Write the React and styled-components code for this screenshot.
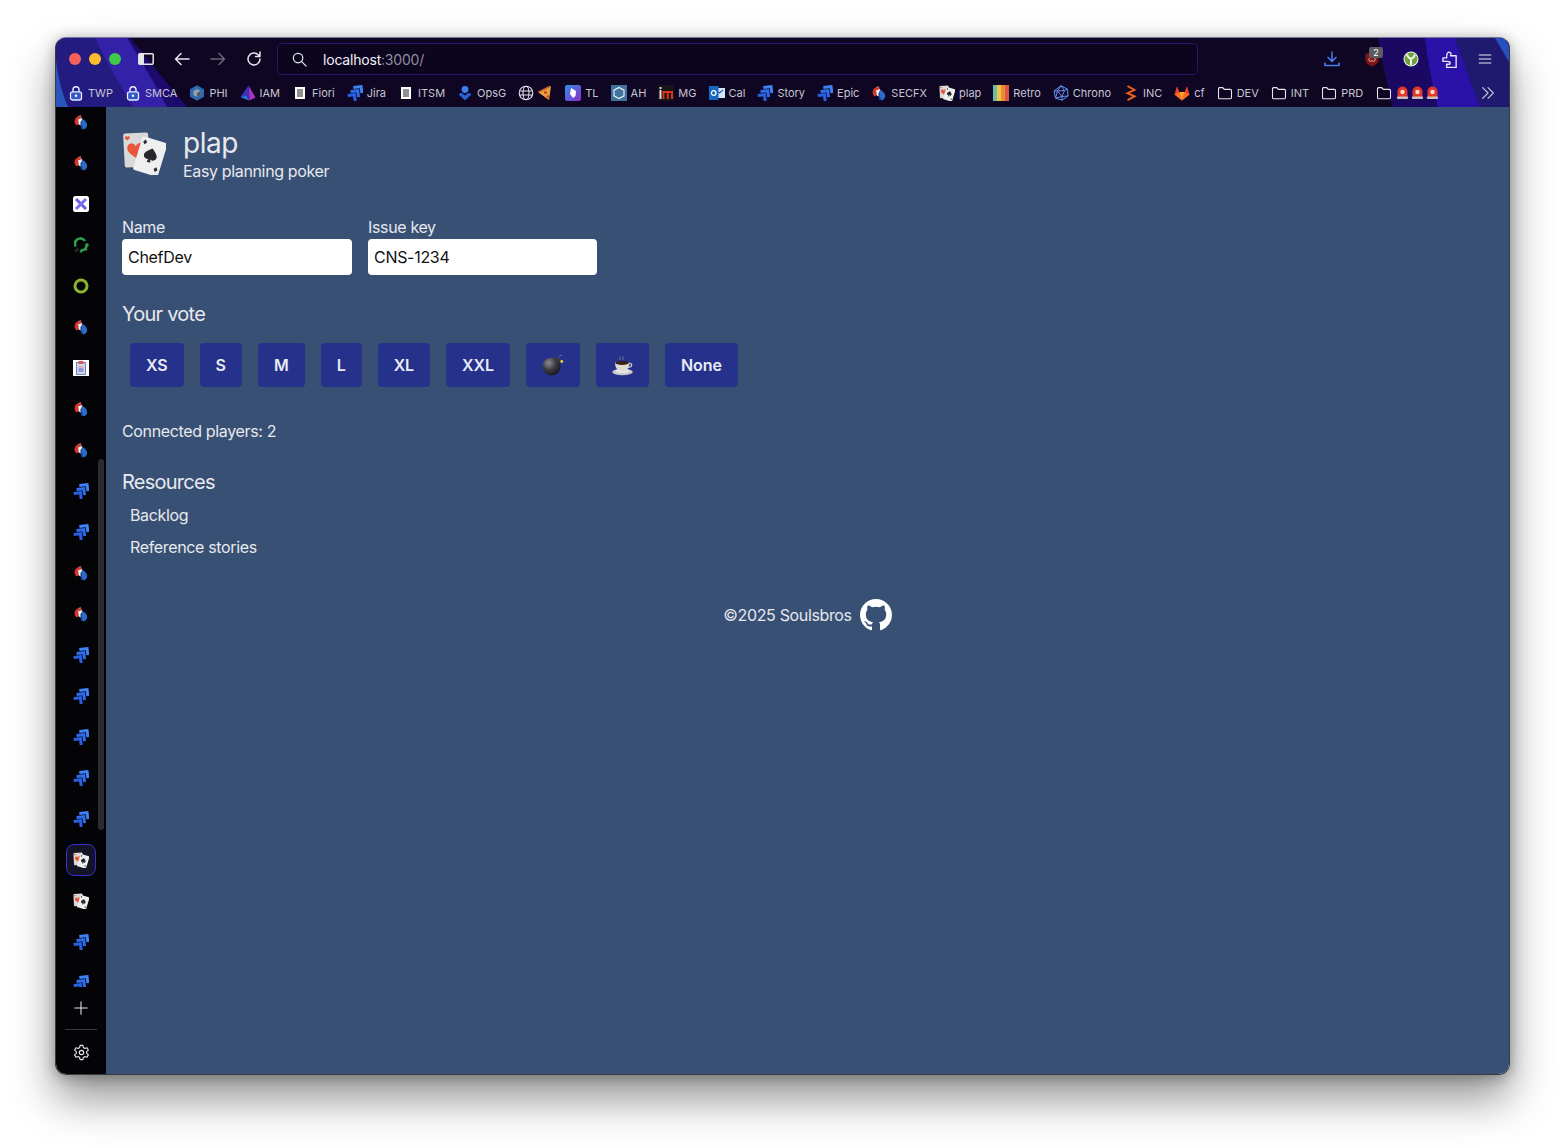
import React from "react";
import styled, { createGlobalStyle } from "styled-components";

const Global = createGlobalStyle`
  html, body { margin: 0; padding: 0; background: #fff; }
  * { box-sizing: border-box; }
  #root { font-family: Inter, "Noto Sans", "Liberation Sans", sans-serif; }
`;

const Page = styled.div`
  width: 1565px;
  height: 1148px;
  padding: 37px 55px 73px;
  overflow: hidden;
  background: #fff;
`;
const Win = styled.div`
  width: 1455px;
  height: 1038px;
  display: flex;
  flex-direction: column;
  border: 1px solid #3a3a42;
  border-top-color: #77749c;
  border-radius: 11px;
  overflow: hidden;
  box-shadow: 0 24px 44px rgba(0,0,0,.42), 0 2px 14px rgba(0,0,0,.3);
`;
const Chrome = styled.header`
  position: relative;
  height: 69px;
  flex: none;
  background: #0e0622;
`;
const ThemeArt = styled.svg`
  position: absolute;
  inset: 0;
  width: 100%;
  height: 100%;
`;
const Toolbar = styled.div`
  position: relative;
  height: 39px;
  padding: 3px 0 0 13px;
  display: flex;
  align-items: center;
`;
const Lights = styled.div`
  display: flex;
  gap: 8px;
  width: 59px;
`;
const Light = styled.span`
  width: 12px;
  height: 12px;
  border-radius: 50%;
  background: ${p => p.$c};
`;
const ToolBtn = styled.span`
  position: relative;
  width: ${p => p.$w || 36}px;
  height: 32px;
  flex: none;
  display: flex;
  align-items: center;
  justify-content: center;
  color: ${p => p.$c || "#e8e8ee"};
`;
const UrlBar = styled.div`
  width: 921px;
  height: 32px;
  margin-left: 5px;
  padding-left: 13px;
  display: flex;
  align-items: center;
  gap: 15px;
  border: 1px solid #25176a;
  border-radius: 5px;
  background: #0c0520;
  color: #e8e8ee;
  font-size: 14px;
  letter-spacing: -.2px;
`;
const Host = styled.span`
  color: #f2f2f5;
`;
const Port = styled.span`
  color: #8f8d9c;
`;
const RightTools = styled.div`
  display: flex;
  margin-left: 115px;
`;
const Badge = styled.span`
  position: absolute;
  left: 18px;
  top: 4px;
  width: 14px;
  height: 11px;
  border-radius: 2px;
  background: #5b5b60;
  color: #fff;
  font-size: 9px;
  line-height: 11px;
  text-align: center;
`;
const Bookmarks = styled.nav`
  position: relative;
  height: 30px;
  padding: 1px 0 0 12px;
  display: flex;
  align-items: center;
  gap: 12px;
`;
const Mark = styled.span`
  display: flex;
  align-items: center;
  gap: ${p => p.$gap ?? 4}px;
  color: #c6c5d0;
  font-size: 11px;
  white-space: nowrap;
  svg { flex: none; display: block; }
`;
const FolderMark = styled(Mark)`
  svg:first-child { margin-right: 2px; margin-left: 1px; }
`;
const More = styled.span`
  position: absolute;
  right: 13px;
  top: 8px;
  color: #c9c8d6;
  display: flex;
`;
const Body = styled.div`
  flex: 1;
  min-height: 0;
  display: flex;
`;
const Side = styled.aside`
  position: relative;
  width: 50px;
  flex: none;
  display: flex;
  flex-direction: column;
  background: #040407;
`;
const SideList = styled.div`
  height: 880px;
  overflow: hidden;
  flex: none;
`;
const SideInner = styled.div`
  margin-top: -5.5px;
`;
const SideItem = styled.div`
  height: 41px;
  display: flex;
  align-items: center;
  justify-content: center;
`;
const ActiveBox = styled.span`
  width: 30px;
  height: 32px;
  display: flex;
  align-items: center;
  justify-content: center;
  border: 1px solid #3a2ed0;
  border-radius: 8px;
  background: #141426;
`;
const Thumb = styled.span`
  position: absolute;
  left: 42px;
  top: 352px;
  width: 6px;
  height: 371px;
  border-radius: 3px;
  background: #2b2b30;
`;
const SideFoot = styled.div`
  flex: 1;
  display: flex;
  flex-direction: column;
  align-items: center;
  color: #e6e6ea;
`;
const FootBtn = styled.span`
  height: ${p => p.$h}px;
  display: flex;
  align-items: center;
  justify-content: center;
`;
const Rule = styled.span`
  width: 32px;
  height: 1px;
  flex: none;
  background: #3a3a3e;
`;
const Main = styled.main`
  flex: 1;
  padding: 20px 16px 0;
  background: #395075;
  color: #e7e9ee;
  font-size: 16px;
  line-height: 24px;
  letter-spacing: -.35px;
`;
const Head = styled.div`
  display: flex;
  align-items: flex-start;
  gap: 17px;
`;
const LogoWrap = styled.span`
  margin-top: 4px;
  display: flex;
`;
const Title = styled.h1`
  margin: 0;
  font-size: 28px;
  line-height: 32px;
  font-weight: 400;
  letter-spacing: -.5px;
`;
const Sub = styled.div`
  font-size: 16px;
  line-height: 24px;
`;
const Form = styled.div`
  margin-top: 32px;
  display: flex;
  gap: 16px;
`;
const Field = styled.label`
  display: flex;
  flex-direction: column;
  width: ${p => p.$w}px;
`;
const Input = styled.input`
  width: 100%;
  height: 36px;
  padding: 0 6px;
  border: 0;
  border-radius: 4px;
  background: #fff;
  color: #111;
  font: 16px Inter, sans-serif;
  letter-spacing: -.3px;
`;
const H2 = styled.h2`
  margin: ${p => p.$mt}px 0 0;
  font-size: 20px;
  line-height: 28px;
  font-weight: 400;
  letter-spacing: -.75px;
`;
const Votes = styled.div`
  margin: 15px 0 0 8px;
  display: flex;
  gap: 16px;
`;
const Vote = styled.button`
  height: 44px;
  padding: 0 16px;
  border: 0;
  border-radius: 4px;
  display: flex;
  align-items: center;
  background: #25318a;
  color: #e9ebf5;
  font: 600 16px Inter, sans-serif;
  letter-spacing: -.07px;
`;
const Players = styled.p`
  margin: 32px 0 0;
`;
const Links = styled.ul`
  margin: 7px 0 0;
  padding: 0 0 0 8px;
  list-style: none;
  display: flex;
  flex-direction: column;
  gap: 8px;
`;
const Foot = styled.footer`
  margin-top: 40px;
  display: flex;
  justify-content: center;
  align-items: center;
  gap: 8px;
`;

const S = ({ s = 16, v = 16, children, ...r }) => (
  <svg width={s} height={s} viewBox={`0 0 ${v} ${v}`} fill="none" {...r}>{children}</svg>
);
const Line = ({ s = 18, children, w = 1.5 }) => (
  <S s={s} v={18} stroke="currentColor" strokeWidth={w} strokeLinecap="round" strokeLinejoin="round">{children}</S>
);

const Lock = () => (
  <S>
    <path d="M5 7V4.8a3 3 0 0 1 6 0V7" stroke="#e8eeff" strokeWidth="1.4" />
    <rect x="2.5" y="6.8" width="11" height="8.2" rx="2" fill="#3458c4" stroke="#e8eeff" strokeWidth="1.3" />
    <circle cx="8" cy="10.8" r="1.2" fill="#fff" />
  </S>
);
const Phi = () => (
  <S>
    <path d="M8 .3 15 4.200V11.800L8 15.700 1 11.800V4.200Z" fill="#2c6ab0" />
    <path d="M8 4 11.600 6V10L8 12 4.400 10V6Z" fill="#96a0aa" />
    <path d="M8 8 11.600 6V10L8 12Z" fill="#50545c" />
  </S>
);
const Iam = () => (
  <S>
    <path d="M8.5 .5 15.500 12.500 9.500 15.500Z" fill="#b02fc0" />
    <path d="M8.5 .5 .5 12 9.500 15.500Z" fill="#3a33b8" />
    <path d="M.5 12 9.500 15.500 6 11Z" fill="#2a7ad8" />
  </S>
);
const Doc = () => (
  <S>
    <rect x="3" y="2" width="10" height="12" fill="#fff" />
    <path d="M5 5h6M5 7h6M5 9h6M5 11h6" stroke="#222" />
  </S>
);
const Jira = ({ s = 16 }) => (
  <S s={s}>
    <g transform="rotate(-7 8 8)" strokeWidth="3" fill="none">
      <path d="M7 2.400H14.800V9" stroke="#3f82f5" />
      <path d="M3.800 6H11V12.500" stroke="#2f6cec" />
      <path d="M.4 9.700H7.200V16" stroke="#2a5fe0" />
    </g>
  </S>
);
const Ops = () => (
  <S>
    <circle cx="8" cy="4.5" r="3.4" fill="#3f7ff0" />
    <path d="M1.500 9.200 8 15.500 14.500 9.200 11.800 7.800 8 10.600 4.200 7.800Z" fill="#2a62d8" />
  </S>
);
const Globe = () => (
  <S stroke="#e4e4ea" strokeWidth="1.1">
    <circle cx="8" cy="8" r="6.8" />
    <ellipse cx="8" cy="8" rx="3" ry="6.8" />
    <path d="M1.5 6h13M1.5 10h13" />
  </S>
);
const Pizza = () => (
  <S s={16}>
    <path d="M14 1.500 1.500 7.500 12 15Z" fill="#e8a23a" />
    <path d="M14 1.500 12.500 .8 1 6.500 1.500 7.500Z" fill="#d9662e" />
    <circle cx="8.500" cy="7.500" r="1.500" fill="#c9402a" />
    <circle cx="11" cy="11.500" r="1.300" fill="#c9402a" />
  </S>
);
const Tl = () => (
  <S>
    <defs>
      <linearGradient id="tlg" x1="0" y1="0" x2="1" y2="1">
        <stop offset="0" stopColor="#2f8fe8" />
        <stop offset="1" stopColor="#8a2fc8" />
      </linearGradient>
    </defs>
    <rect width="16" height="16" rx="2" fill="url(#tlg)" />
    <path d="M6 3 11 6 10.5 11 8 13 5 9Z" fill="#fff" />
  </S>
);
const Ah = () => (
  <S>
    <rect width="16" height="16" fill="#3f729c" />
    <path d="M8 2.4 13 5.2V10.8L8 13.6 3 10.8V5.2Z" stroke="#e8f0f6" strokeWidth="1.2" />
  </S>
);
const Mg = () => (
  <S>
    <rect width="16" height="16" fill="#151515" />
    <rect x="1.5" y="2" width="2" height="2" fill="#ddd" />
    <rect x="1.5" y="5" width="2" height="9" fill="#ddd" />
    <path d="M5.5 14V7H14V14M9.8 7V14" stroke="#e0301e" strokeWidth="2" />
  </S>
);
const Outlook = () => (
  <S>
    <rect x="6" y="3" width="10" height="10" fill="#d4e6f8" />
    <path d="M8 6l2.5 2L14 5" stroke="#1e62b8" strokeWidth="1.2" />
    <rect y="1" width="9.500" height="14" fill="#1766c2" />
    <circle cx="4.7" cy="8" r="2.3" stroke="#fff" strokeWidth="1.3" />
  </S>
);
const Secfx = ({ s = 16 }) => (
  <S s={s}>
    <path d="M8 1.200C4.600 1.400 1.600 4 1.600 7.400c0 1.600.8 3 2.200 4L6 10 5 6.600l4-2.200Z" fill="#d9352a" />
    <path d="M7.500 .8 6 2.600l1.300.9Z" fill="#5a8fd8" />
    <path d="M5 5.600 9 4 9.500 6.500 7.500 8 8 11.500 5.800 10.500Z" fill="#f2f2f2" />
    <path d="M9 4.500c3 1.800 5.200 4 5.200 6.800a3.800 3.800 0 0 1-6 3.200C7.400 12 7.800 8 9 4.500Z" fill="#2a6cc8" />
    <path d="M8.500 6.500c-1 3-1 6 0 8.300 1 .5 1.500.5 2 .4C9 13 8.500 10 8.500 6.500Z" fill="#16418c" />
  </S>
);
const Cards = ({ s = 16 }) => (
  <S s={s} v={44}>
    <g transform="rotate(-3 14 20)">
      <rect x="2" y="2" width="25" height="34" rx="2" fill="#d9d9d9" />
      <path d="M14 27c-7-5-8.500-7.500-8.500-10a4.200 4.200 0 0 1 8.500-1.200 4.200 4.200 0 0 1 8.500 1.200c0 2.500-1.500 5-8.500 10Z" fill="#e8553a" />
      <path d="M6 9c-2-1.500-2.500-2.200-2.500-3a1.300 1.300 0 0 1 2.500-.4 1.300 1.300 0 0 1 2.500.4c0 .8-.5 1.500-2.500 3Z" fill="#e8553a" />
    </g>
    <g transform="rotate(17 28 26)">
      <rect x="15" y="8" width="26" height="35" rx="2" fill="#efefef" />
      <path d="M28 17c4.500 3.600 6.500 5.500 6.500 8.200a3.600 3.600 0 0 1-5.500 3l.9 3.300h-3.800l.9-3.300a3.600 3.600 0 0 1-5.500-3c0-2.700 2-4.600 6.500-8.200Z" fill="#26282c" />
      <path d="M19 10.500l2 2.600-2 2.400-2-2.400Z" fill="#26282c" />
      <path d="M37 34l2 2.500-2 2.500-2-2.500Z" fill="#26282c" />
    </g>
  </S>
);
const Retro = () => (
  <S>
    <rect width="4" height="16" fill="#6cbcae" />
    <rect x="4" width="4" height="16" fill="#f0c63c" />
    <rect x="8" width="4" height="16" fill="#ec8c3c" />
    <rect x="12" width="4" height="16" fill="#dd5644" />
  </S>
);
const Chrono = () => (
  <S stroke="#5a9cf0" strokeWidth="1">
    <path d="M8 .8 14.500 4.200 15 11 9 15.200 2.500 13 1 6Z" />
    <path d="M8 .8 4.500 6 11.500 5.500ZM4.500 6 1 6M4.500 6 9 11.500 11.500 5.500 14.500 4.200M9 11.500 15 11M9 11.500 9 15.200M4.500 6 2.500 13M2.500 13 9 11.500" stroke="#6f8df0" />
  </S>
);
const Inc = () => (
  <S>
    <path d="M4.500 1 11.500 5 4.500 8.200 11.500 11.400 4.500 15.200" stroke="#e8601c" strokeWidth="2" />
  </S>
);
const GitLab = () => (
  <S>
    <path d="M8 15.500 .5 9.500 3 1 5.300 7H10.700L13 1 15.500 9.500Z" fill="#e24329" />
    <path d="M8 15.500 5.300 7H10.700Z" fill="#fca326" />
    <path d="M.5 9.500 5.300 7 8 15.500ZM15.500 9.500 10.700 7 8 15.500Z" fill="#fc6d26" />
  </S>
);
const Folder = () => (
  <S>
    <path d="M1.500 12.500V3.800c0-.7.5-1.200 1.200-1.200h3l1.600 1.800h6c.7 0 1.200.5 1.200 1.200v6.900c0 .7-.5 1.200-1.200 1.200H2.700c-.7 0-1.200-.5-1.200-1.200Z" stroke="#e6e6ea" strokeWidth="1.1" />
  </S>
);
const Siren = () => (
  <S s={13} v={13}>
    <path d="M1.500 11V5.500a5 5 0 0 1 10 0V11Z" fill="#e0392c" />
    <rect x="1" y="10.500" width="11" height="2.500" rx=".8" fill="#c8c0b8" />
    <circle cx="6.500" cy="6" r="2.200" fill="#fbd8d0" />
  </S>
);
const Crossed = () => (
  <S>
    <rect width="16" height="16" rx="2.500" fill="#fff" />
    <path d="M3 3 13 13" stroke="#6a5ce6" strokeWidth="3" />
    <path d="M13 3 3 13" stroke="#7c6ef0" strokeWidth="3" />
  </S>
);
const GearGreen = () => (
  <S stroke="#2f9e4f" strokeWidth="2.400">
    <path d="M2.800 9.500A5.300 5.300 0 0 1 12 4" />
    <path d="M13.300 6.500A5.300 5.300 0 0 1 7.500 13.400" />
    <path d="M8 .4v2.400M15.600 8h-2.400M8 15.600v-2M1.500 3.500l2 1.700M13.800 13.200l-1.700-1.700" />
    <path d="M2 14.500 5.500 11.500" stroke="#2a2a2a" />
  </S>
);
const Ring = () => (
  <S>
    <circle cx="8" cy="8" r="6" stroke="#8ab52e" strokeWidth="3" />
  </S>
);
const Clip = () => (
  <S>
    <rect width="16" height="16" fill="#fff" />
    <rect x="3.500" y="2.500" width="9" height="12" fill="#d2d4ea" stroke="#5a6aac" strokeWidth=".8" />
    <rect x="5.500" y="1" width="5" height="3" fill="#d85a5a" />
    <path d="M5.500 7h5" stroke="#d88a9a" />
    <path d="M5.500 9h5M5.500 11h5" stroke="#4a66c0" />
  </S>
);
const Bomb = () => (
  <S s={22} v={22}>
    <defs>
      <radialGradient id="bombg" cx=".35" cy=".3" r=".8">
        <stop offset="0" stopColor="#8b8b90" />
        <stop offset=".5" stopColor="#3a3b40" />
        <stop offset="1" stopColor="#101114" />
      </radialGradient>
    </defs>
    <circle cx="9.500" cy="12.500" r="9" fill="url(#bombg)" />
    <path d="M13.500 4.500 16 3 18.500 6.500 16.500 8.500Z" fill="#3a3b40" />
    <path d="M17 3.500c.6-1.500 1.300-2.300 2.500-2.300" stroke="#9a8f7a" strokeWidth=".8" />
    <circle cx="19.800" cy="7.500" r="1.400" fill="#f4d43a" />
  </S>
);
const Coffee = () => (
  <S s={21} v={21}>
    <path d="M8 5c-1-1 .8-1.800 0-3.500M11 5c-1-1 .8-1.800 0-3.500" stroke="#7f92ad" strokeWidth=".8" />
    <ellipse cx="10.500" cy="17" rx="10.300" ry="3.300" fill="#c9c9c9" />
    <ellipse cx="10.500" cy="16" rx="7.500" ry="2" fill="#e6e6e6" />
    <path d="M3 7.500h14.500c0 5-2.200 8.500-7.200 8.500S3 12.500 3 7.500Z" fill="#dedad4" />
    <path d="M17 8.500c3.500-.8 4 3.500-.8 4" stroke="#d4d0ca" strokeWidth="1.200" />
    <ellipse cx="10.200" cy="8" rx="6.800" ry="1.900" fill="#3a2216" />
  </S>
);
const Octo = () => (
  <S s={32}>
    <path fill="#fff" fillRule="evenodd" d="M8 0C3.580 0 0 3.580 0 8c0 3.540 2.290 6.530 5.470 7.590.4.070.55-.17.55-.38 0-.19-.01-.82-.01-1.490-2.010.37-2.530-.49-2.690-.94-.09-.23-.48-.94-.82-1.130-.28-.15-.68-.52-.01-.53.63-.01 1.080.58 1.230.82.72 1.210 1.870.87 2.330.66.070-.52.280-.87.510-1.070-1.780-.2-3.640-.89-3.640-3.950 0-.87.310-1.590.820-2.150-.08-.2-.36-1.020.08-2.120 0 0 .67-.21 2.200.82.640-.18 1.320-.27 2-.27.680 0 1.360.090 2 .27 1.530-1.040 2.200-.82 2.200-.82.440 1.100.160 1.920.080 2.120.510.560.820 1.270.820 2.150 0 3.070-1.870 3.750-3.650 3.950.290.250.540.730.540 1.480 0 1.070-.01 1.930-.01 2.200 0 .21.150.460.550.380A8.013 8.013 0 0 0 16 8c0-4.420-3.580-8-8-8z" />
  </S>
);

const marks = [
  [Lock, "TWP"], [Lock, "SMCA"], [Phi, "PHI"], [Iam, "IAM"], [Doc, "Fiori"], [Jira, "Jira"],
  [Doc, "ITSM"], [Ops, "OpsG"],
];
const marks2 = [
  [Tl, "TL"], [Ah, "AH"], [Mg, "MG"], [Outlook, "Cal"], [Jira, "Story"], [Jira, "Epic"], [Secfx, "SECFX"],
  [Cards, "plap"], [Retro, "Retro"], [Chrono, "Chrono"], [Inc, "INC"], [GitLab, "cf"],
  [Folder, "DEV"], [Folder, "INT"], [Folder, "PRD"],
];
const sideIcons = [
  Secfx, Secfx, Crossed, GearGreen, Ring, Secfx, Clip, Secfx, Secfx, Jira, Jira, Secfx, Secfx,
  Jira, Jira, Jira, Jira, Jira, null, Cards, Jira, Jira,
];
const votes = ["XS", "S", "M", "L", "XL", "XXL", <Bomb key="b" />, <Coffee key="c" />, "None"];

export default function App() {
  return (
    <Page>
      <Global />
      <Win>
        <Chrome>
          <ThemeArt viewBox="0 0 1453 69" preserveAspectRatio="none">
            <path d="M0 0H74C95 25 115 50 131 69H0Z" fill="#1c0a6c" />
            <path d="M0 0H39C50 25 65 48 77 69H0Z" fill="#241b80" />
            <path d="M39 0H71C85 22 100 48 111 69H77C65 48 50 25 39 0Z" fill="#3322a8" />
            <path d="M0 22C2 40 6 55 12 69H0Z" fill="#2a55bd" />
            <path d="M1322 0C1326 25 1332 50 1337 69H1453V0Z" fill="#1a0863" />
            <path d="M1369 0C1372 25 1377 50 1382 69H1424L1399 0Z" fill="#2a12a8" />
            <path d="M1399 0 1424 69H1453V0Z" fill="#1f1a70" />
            <path d="M1439 0H1453V24Z" fill="#2450c0" />
          </ThemeArt>
          <Toolbar>
            <Lights>
              <Light $c="#f5605a" />
              <Light $c="#fbbd2f" />
              <Light $c="#3fc84a" />
            </Lights>
            <ToolBtn>
              <S s={16} v={16}>
                <rect x=".8" y="2.800" width="14.400" height="10.400" rx="1" stroke="#e6e6ea" strokeWidth="1.500" />
                <rect x="1" y="3" width="5" height="10" fill="#e6e6ea" />
              </S>
            </ToolBtn>
            <ToolBtn>
              <Line><path d="M16 9H2.500M8 3.500 2.500 9 8 14.500" /></Line>
            </ToolBtn>
            <ToolBtn $c="#6a6878">
              <Line><path d="M2 9H15.500M10 3.500 15.500 9 10 14.500" /></Line>
            </ToolBtn>
            <ToolBtn>
              <Line><path d="M15 9a6 6 0 1 1-1.800-4.300L15 6.500M15 2v4.500h-4.500" /></Line>
            </ToolBtn>
            <UrlBar>
              <Line s={17} w={1.300}><circle cx="7.500" cy="7.500" r="5" /><path d="M11.300 11.300 16 16" /></Line>
              <span><Host>localhost</Host><Port>:3000/</Port></span>
            </UrlBar>
            <RightTools>
              <ToolBtn $w={38} $c="#4a7df0">
                <Line><path d="M9 2v9.500M5 7.500 9 11.500 13 7.500M2 13v2.500h14V13" /></Line>
              </ToolBtn>
              <ToolBtn $w={41}>
                <S s={16}><path d="M1.500 3 8 1l6.500 2v6c0 3-3 5-6.500 6.500C4.500 14 1.500 12 1.500 9Z" fill="#7e1414" /><path d="M5 7v2a1.500 1.500 0 0 0 3 0 1.500 1.500 0 0 0 3 0V7" stroke="#d8a0a0" strokeWidth="1" /></S>
                <Badge>2</Badge>
              </ToolBtn>
              <ToolBtn $w={38}>
                <S s={16}><circle cx="8" cy="8" r="7.500" fill="#f2f4ee" /><circle cx="8" cy="8" r="6.500" fill="#6da33a" /><path d="M4 3.500c1 3 2.500 4 4 4s3-1 4-4M8 7.500V14" stroke="#f2f4ee" strokeWidth="2" /></S>
              </ToolBtn>
              <ToolBtn $w={38}>
                <S s={19} v={18} stroke="#e8e8ee" strokeWidth="1.300" strokeLinejoin="round">
                  <path d="M2.800 7.500h3.500V6c0-3 .8-3.500 1.800-4C9.800 2 10.800 3 10.300 4.500L10 5.500H15.300v11H6.300v-3H8.800c.8 0 1-1 .5-2-.4-.7-1.500-.7-2.500-.7H2.800Z" />
                </S>
              </ToolBtn>
              <ToolBtn $w={34}>
                <Line w={1.400} s={16}><path d="M2.500 4.500h13M2.500 9h13M2.500 13.500h13" /></Line>
              </ToolBtn>
            </RightTools>
          </Toolbar>
          <Bookmarks>
            {marks.map(([I, t]) => <Mark key={t}><I />{t}</Mark>)}
            <Mark $gap={3}><Globe /><Pizza /></Mark>
            {marks2.map(([I, t]) => <Mark key={t}><I />{t}</Mark>)}
            <FolderMark $gap={2}><Folder /><Siren /><Siren /><Siren /></FolderMark>
            <More><Line w={1.300} s={16}><path d="M3 3l6 6-6 6M9 3l6 6-6 6" /></Line></More>
          </Bookmarks>
        </Chrome>
        <Body>
          <Side>
            <SideList>
              <SideInner>
                {sideIcons.map((I, i) => (
                  <SideItem key={i}>
                    {I ? <I /> : <ActiveBox><Cards /></ActiveBox>}
                  </SideItem>
                ))}
              </SideInner>
            </SideList>
            <Thumb />
            <SideFoot>
              <FootBtn $h={42}>
                <Line s={16} w={1.200}><path d="M9 2v14M2 9h14" /></Line>
              </FootBtn>
              <Rule />
              <FootBtn $h={44}>
                <Line s={17} w={1.200}>
                  <circle cx="9" cy="9" r="2.300" />
                  <path d="M7.500 1.500h3l.5 2.300 1.500.9 2.300-.8 1.500 2.600-1.800 1.600v1.800l1.800 1.600-1.500 2.600-2.300-.8-1.500.9-.5 2.300h-3l-.5-2.300-1.500-.9-2.300.8-1.500-2.600 1.800-1.600V8.100L1.700 6.500l1.500-2.600 2.300.8 1.500-.9Z" />
                </Line>
              </FootBtn>
            </SideFoot>
          </Side>
          <Main>
            <Head>
              <LogoWrap><Cards s={44} /></LogoWrap>
              <div>
                <Title>plap</Title>
                <Sub>Easy planning poker</Sub>
              </div>
            </Head>
            <Form>
              <Field $w={230}>Name<Input defaultValue="ChefDev" /></Field>
              <Field $w={229}>Issue key<Input defaultValue="CNS-1234" /></Field>
            </Form>
            <H2 $mt={25}>Your vote</H2>
            <Votes>
              {votes.map((v, i) => <Vote key={i}>{v}</Vote>)}
            </Votes>
            <Players>Connected players: 2</Players>
            <H2 $mt={25}>Resources</H2>
            <Links>
              <li>Backlog</li>
              <li>Reference stories</li>
            </Links>
            <Foot>
              <span>©2025 Soulsbros</span>
              <Octo />
            </Foot>
          </Main>
        </Body>
      </Win>
    </Page>
  );
}
